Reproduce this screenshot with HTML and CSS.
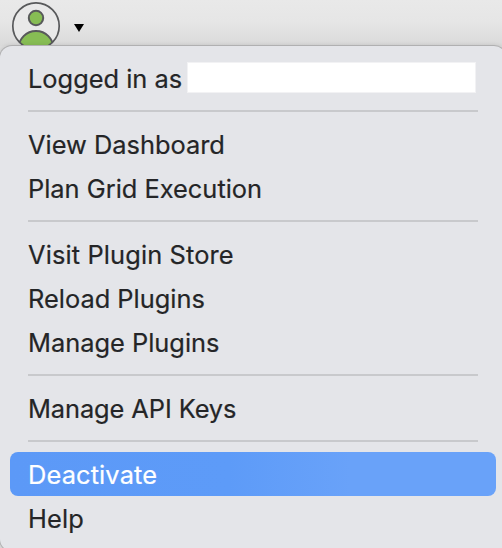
FILE: index.html
```
<!DOCTYPE html>
<html lang="en">
<head>
<meta charset="utf-8">
<title>Account menu</title>
<link rel="stylesheet" href="styles.css">
</head>
<body>
<header class="toolbar">
  <svg class="avatar" width="50" height="50" viewBox="0 0 50 50">
    <defs><clipPath id="disc"><circle cx="25" cy="25" r="23"/></clipPath></defs>
    <circle cx="25" cy="25" r="23" fill="#e9e9e9"/>
    <g fill="#87bd54" stroke="#58595b" stroke-width="2">
      <circle cx="25" cy="17" r="7.2"/>
      <circle cx="25" cy="47.500" r="17.500" clip-path="url(#disc)"/>
    </g>
    <circle cx="25" cy="25" r="23.200" fill="none" stroke="#58595b" stroke-width="1.700"/>
  </svg>
  <svg class="caret" width="10" height="8" viewBox="0 0 10 8"><path d="M0 0H10L5 8Z"/></svg>
</header>
<ul class="menu">
  <li class="item"><span>Logged in as</span><span class="redacted"></span></li>
  <li class="separator"></li>
  <li class="item"><span>View Dashboard</span></li>
  <li class="item"><span>Plan Grid Execution</span></li>
  <li class="separator"></li>
  <li class="item"><span class="loose">Visit Plugin Store</span></li>
  <li class="item"><span>Reload Plugins</span></li>
  <li class="item"><span>Manage Plugins</span></li>
  <li class="separator"></li>
  <li class="item"><span class="tight">Manage API Keys</span></li>
  <li class="separator"></li>
  <li class="item selected"><span class="loose">Deactivate</span></li>
  <li class="item"><span class="loose">Help</span></li>
</ul>
</body>
</html>
```
FILE: styles.css
```
* { box-sizing: border-box; }
html, body { height: 100%; }
body {
  margin: 0;
  overflow: hidden;
  background: #dcdcdc;
  font-family: Inter, "Liberation Sans", sans-serif;
  font-size: 25.4px;
  color: #242527;
}
.toolbar {
  display: flex;
  align-items: flex-start;
  height: 46px;
  padding: 1px 0 0 11px;
  background: linear-gradient(#e9e9e9 0, #e6e6e6 22px, #dadada 46px);
}
.avatar { flex: none; }
.caret { margin: 23px 0 0 13px; fill: #000; }
.menu {
  position: relative;
  width: 506px;
  height: 505px;
  margin: 0;
  padding: 10px 10px 11px;
  list-style: none;
  background: #e4e5e9;
  border-radius: 12px;
  box-shadow: 0 0 0 1px #b0b0b1, 0 0 5px rgba(0, 0, 0, .16);
}
.item {
  display: flex;
  align-items: center;
  height: 44px;
  padding: 2px 0 0 18px;
  white-space: nowrap;
  line-height: 42px;
  -webkit-text-stroke: .2px currentColor;
}
.loose { letter-spacing: .13px; }
.tight { letter-spacing: -.09px; }
.separator {
  height: 2px;
  margin: 10px 18px;
  background: #c8c9cc;
}
.selected {
  border-radius: 8px;
  color: #fff;
  background: linear-gradient(90deg, #5c99f7, #5d9bf8 45%, #69a2f9 70%);
}
.redacted {
  width: 289px;
  height: 31px;
  margin: 0 0 4px 5px;
  background: #fff;
  border: 1px solid #f2f2f4;
}
```
